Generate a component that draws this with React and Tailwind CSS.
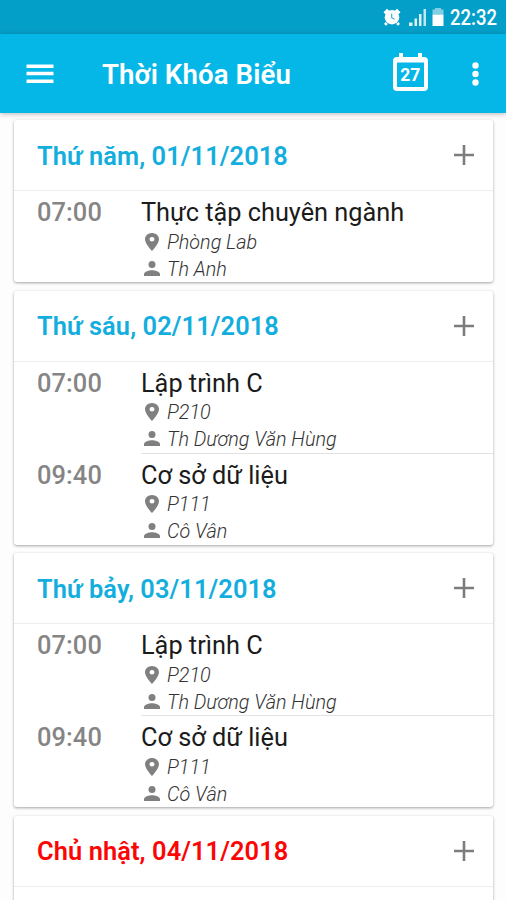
const days = [
  {
    title: 'Thứ năm, 01/11/2018',
    lessons: [{ time: '07:00', subject: 'Thực tập chuyên ngành', room: 'Phòng Lab', teacher: 'Th Anh' }],
  },
  {
    title: 'Thứ sáu, 02/11/2018',
    lessons: [
      { time: '07:00', subject: 'Lập trình C', room: 'P210', teacher: 'Th Dương Văn Hùng' },
      { time: '09:40', subject: 'Cơ sở dữ liệu', room: 'P111', teacher: 'Cô Vân' },
    ],
  },
  {
    title: 'Thứ bảy, 03/11/2018',
    lessons: [
      { time: '07:00', subject: 'Lập trình C', room: 'P210', teacher: 'Th Dương Văn Hùng' },
      { time: '09:40', subject: 'Cơ sở dữ liệu', room: 'P111', teacher: 'Cô Vân' },
    ],
  },
  {
    title: 'Chủ nhật, 04/11/2018',
    isSunday: true,
    lessons: [],
  },
]

function StatusBar() {
  return (
    <div className="flex h-[34px] shrink-0 items-center justify-end bg-[#049fc9] pr-[10px] text-white">
      <svg className="h-[18px] w-[18px]" viewBox="0 0 18 18" fill="currentColor">
        <circle cx="9" cy="9.2" r="7.300" />
        <path d="M.5 4.200 4 .7l2 2.100L2.400 6.300zM17.500 4.200 14 .7l-2 2.100 3.600 3.500zM2.600 14l2.200 2-1.600 1.800-2.200-1.800zM15.400 14l-2.200 2 1.600 1.800 2.200-1.800z" />
        <path d="M8.600 5.400v4.200l3 1.600" fill="none" stroke="#49b9d8" strokeWidth="1.3" />
      </svg>
      <svg className="ml-[8px] h-[18px] w-[18px]" viewBox="0 0 18 18" fill="currentColor">
        <path d="M0 14.500h3.500V18H0zM5.500 10.500h2.500V18H5.500zM10 6h2.500v12H10z" opacity=".85" />
        <path d="M14.500 1H17v17h-2.500z" opacity=".75" />
      </svg>
      <svg className="ml-[5px] h-[18px] w-[12px]" viewBox="0 0 12 18" fill="currentColor">
        <path d="M3 0h6v1.500h2.500v5H.5v-5H3z" opacity=".5" />
        <path d="M.5 6.500h11V18H.5z" />
      </svg>
      <span className="ml-[6px] w-[46px] origin-left scale-x-[0.86] pt-[2px] whitespace-nowrap text-[21.5px] leading-8 font-medium">
        22:32
      </span>
    </div>
  )
}

function AppBar() {
  return (
    <header className="z-10 flex h-[79px] shrink-0 items-center bg-[#05b7e7] pr-[27px] pl-[26px] text-white shadow-[0_1px_5px_rgba(0,0,0,0.28)]">
      <svg className="h-5 w-7" viewBox="0 0 28 20" fill="currentColor">
        <path d="M.5 .5h27v3.500H.5zM.5 7.700h27v3.500H.5zM.5 15.500h27v3.500H.5z" />
      </svg>
      <h1 className="ml-12 flex-1 pt-[3px] text-[27.6px] leading-8 font-semibold tracking-[0.1px]">Thời Khóa Biểu</h1>
      <svg className="mb-[2px] h-[39px] w-[35px]" viewBox="0 0 35 39">
        <path d="M6 0h4v4h15V0h4v4h2a4 4 0 0 1 4 4v26a4 4 0 0 1-4 4H4a4 4 0 0 1-4-4V8a4 4 0 0 1 4-4h2z" fill="#fff" />
        <path d="M4 9.500h27V34H4z" fill="#05b7e7" />
        <text x="17.300" y="27.500" textAnchor="middle" fill="#fff" fontSize="17.500" fontWeight="700">27</text>
      </svg>
      <svg className="ml-[44px] h-6 w-[7px]" viewBox="0 0 7 24" fill="currentColor">
        <circle cx="3.500" cy="3.500" r="3.200" />
        <circle cx="3.500" cy="12" r="3.200" />
        <circle cx="3.500" cy="20.500" r="3.200" />
      </svg>
    </header>
  )
}

function Lesson({ lesson, divided }) {
  return (
    <div className="flex h-[91px] pl-[23px] first:h-[92px] last:h-[91px]">
      <div className="w-[104px] pt-[6px] text-[25.4px] leading-[30px] font-medium tracking-[0.1px] text-[#858585]">
        {lesson.time}
      </div>
      <div className={divided ? 'flex-1 border-b border-[#e2e2e2]' : 'flex-1'}>
        <div className="pt-[7px] text-[25.3px] leading-[30px] text-[#1b1b1b]">{lesson.subject}</div>
        <div className="mt-px flex h-[27px] items-center gap-[8px] pl-1 text-[19.8px] font-light text-[#333] italic">
          <svg className="mb-[2px] h-[18px] w-[14px]" viewBox="5 2 14 20" preserveAspectRatio="none" fill="#808080">
            <path d="M12 2C8.130 2 5 5.130 5 9c0 5.250 7 13 7 13s7-7.750 7-13c0-3.870-3.130-7-7-7zm0 9.500a2.500 2.500 0 1 1 0-5 2.500 2.500 0 0 1 0 5z" />
          </svg>
          {lesson.room}
        </div>
        <div className="flex h-[27px] items-center gap-[7px] pl-[3px] text-[19.8px] font-light text-[#333] italic">
          <svg className="mb-[3px] h-[15px] w-4" viewBox="0 0 16 15" fill="#808080">
            <circle cx="8" cy="3.600" r="3.500" />
            <path d="M0 15v-2c0-2.500 5.300-3.800 8-3.800s8 1.300 8 3.800v2z" />
          </svg>
          {lesson.teacher}
        </div>
      </div>
    </div>
  )
}

function DayCard({ day }) {
  return (
    <section className="shrink-0 rounded-[3px] bg-white shadow-[0_1px_3px_rgba(0,0,0,0.36)] last:h-[162px]">
      <div className="flex h-[71px] items-center justify-between border-b border-[#eeeeee] pr-[19px] pl-[23px]">
        <h2
          className={
            day.isSunday
              ? 'pt-px text-[25.4px] leading-8 font-semibold tracking-[0.1px] text-[#fb0505]'
              : 'pt-px text-[25.4px] leading-8 font-semibold tracking-[0.1px] text-[#13aedd]'
          }
        >
          {day.title}
        </h2>
        <svg className="h-5 w-5" viewBox="0 0 20 20" fill="none" stroke="#7c7c7c" strokeWidth="2.600">
          <path d="M10 0v20M0 10h20" />
        </svg>
      </div>
      <div>
        {day.lessons.map((lesson, index) => (
          <Lesson key={lesson.time} lesson={lesson} divided={index < day.lessons.length - 1} />
        ))}
      </div>
    </section>
  )
}

export default function App() {
  return (
    <div className="flex h-[900px] w-[506px] flex-col overflow-hidden bg-[#fdfdfd] font-['Roboto',sans-serif]">
      <StatusBar />
      <AppBar />
      <main className="flex min-h-0 flex-1 flex-col gap-[8.5px] overflow-hidden pt-[7px] pr-[13px] pl-[14px]">
        {days.map((day) => (
          <DayCard key={day.title} day={day} />
        ))}
      </main>
    </div>
  )
}
